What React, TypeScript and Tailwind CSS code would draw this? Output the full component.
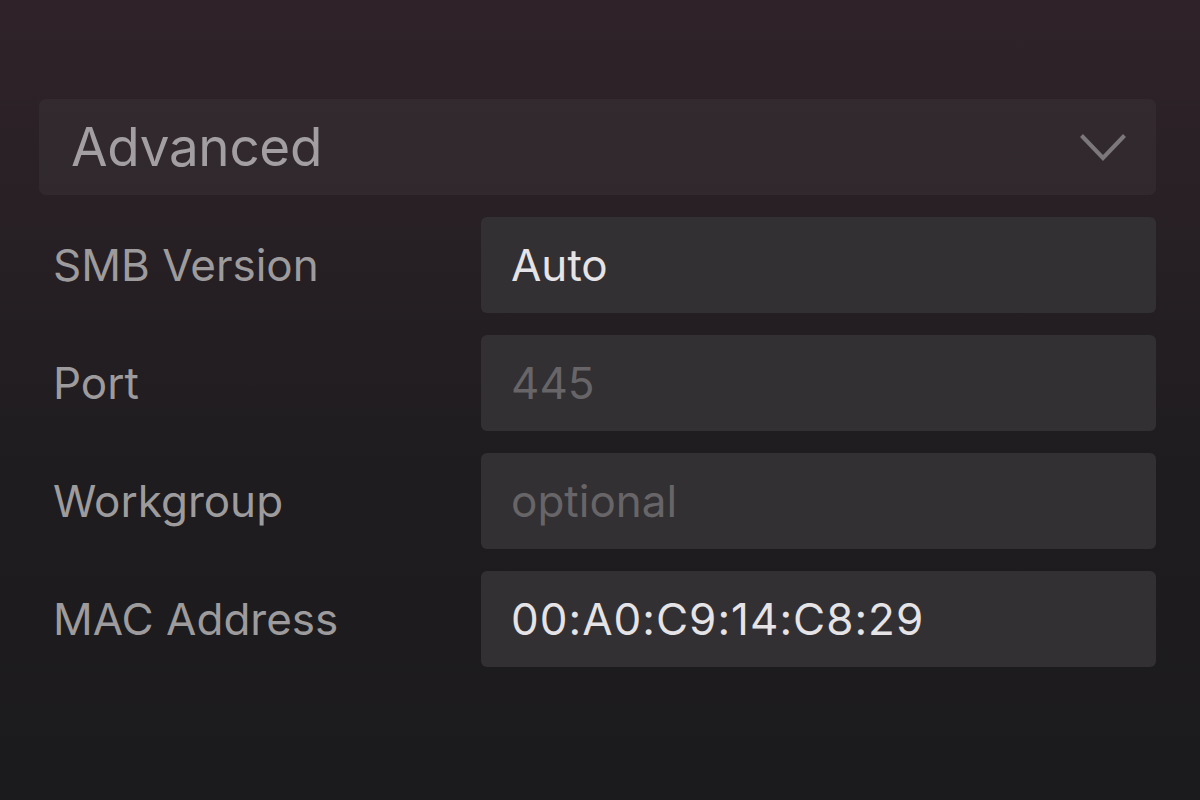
import React from "react";

const rows: { label: string; value: string; placeholder?: boolean; wide?: boolean }[] = [
  { label: "SMB Version", value: "Auto" },
  { label: "Port", value: "445", placeholder: true },
  { label: "Workgroup", value: "optional", placeholder: true },
  { label: "MAC Address", value: "00:A0:C9:14:C8:29", wide: true },
];

export default function App() {
  return (
    <div
      className="w-[1200px] h-[800px] overflow-hidden bg-gradient-to-b from-[#2f2329] via-[#1e1c1f] via-60% to-[#1b1a1c]"
      style={{ fontFamily: "Inter, 'Noto Sans', 'Liberation Sans', sans-serif" }}
    >
      <div className="pt-[99px] pl-[39px] pr-[44px] flex flex-col gap-[22px]">
        <div className="h-[96px] rounded-[7px] bg-white/[0.035] flex items-center justify-between pl-[32px] pr-[29px]">
          <span className="text-[53px] leading-none text-[#a29ea1] tracking-[-0.3px]">Advanced</span>
          <svg width="48" height="28" viewBox="0 0 48 28" fill="none">
            <polyline points="2.5,2.5 24,25 45.5,2.5" stroke="#7b777a" strokeWidth="4" strokeLinejoin="miter" />
          </svg>
        </div>
        {rows.map((r) => (
          <div key={r.label} className="flex items-center h-[96px]">
            <div className="w-[442px] pl-[14px] text-[44px] leading-none text-[#9e9b9d]">{r.label}</div>
            <div className="flex-1 h-full rounded-[6px] bg-[#323033] flex items-center pl-[30px]">
              <span
                className={
                  "text-[44px] leading-none " +
                  (r.placeholder ? "text-[#676567]" : "text-[#e5e3e5]") +
                  (r.wide ? " tracking-[1px]" : "")
                }
              >
                {r.value}
              </span>
            </div>
          </div>
        ))}
      </div>
    </div>
  );
}
